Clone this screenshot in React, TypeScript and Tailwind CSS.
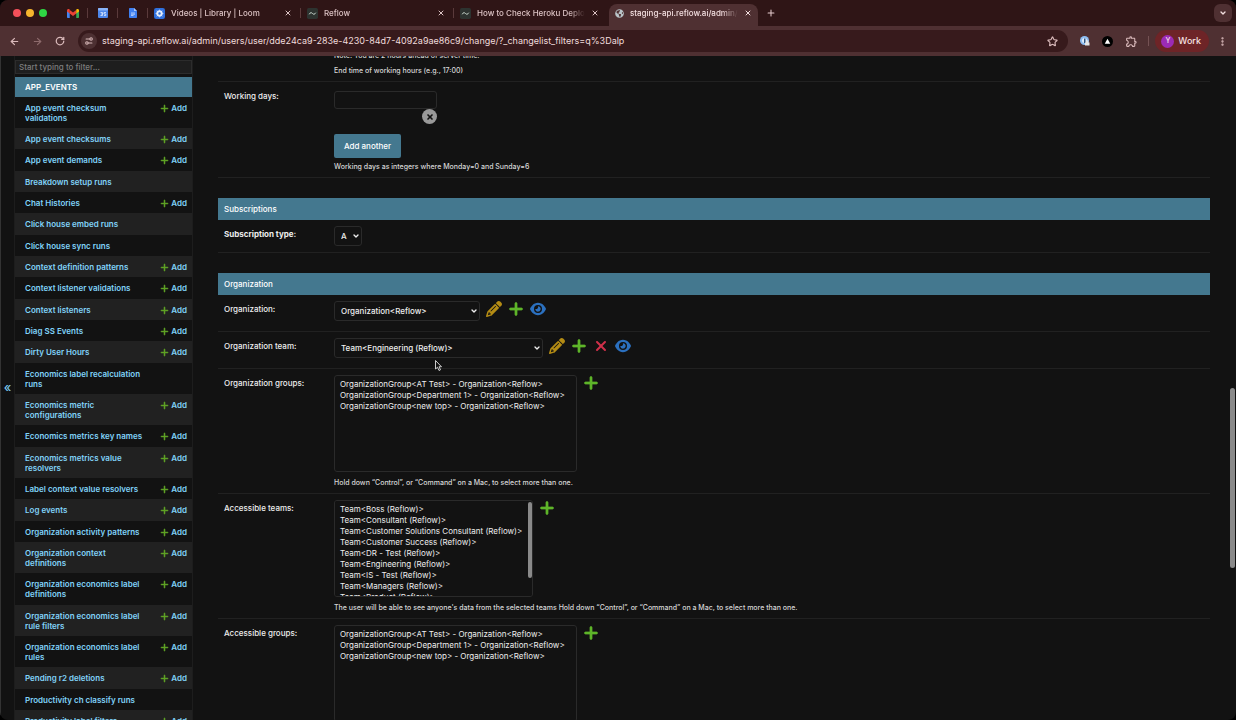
import type { ReactNode } from 'react';
import { ArrowLeft, ArrowRight, ChevronDown, EllipsisVertical, Plus, RotateCw, Settings2, Star, X } from 'lucide-react';
import { FaEye, FaPencil, FaPlus, FaXmark } from 'react-icons/fa6';
import { FaGlobeAmericas } from 'react-icons/fa';
import { MdOutlineExtension } from 'react-icons/md';

const models = [
  { name: 'App event checksum validations', add: true },
  { name: 'App event checksums', add: true },
  { name: 'App event demands', add: true },
  { name: 'Breakdown setup runs', add: false },
  { name: 'Chat Histories', add: true },
  { name: 'Click house embed runs', add: false },
  { name: 'Click house sync runs', add: false },
  { name: 'Context definition patterns', add: true },
  { name: 'Context listener validations', add: true },
  { name: 'Context listeners', add: true },
  { name: 'Diag SS Events', add: true },
  { name: 'Dirty User Hours', add: true },
  { name: 'Economics label recalculation runs', add: false },
  { name: 'Economics metric configurations', add: true },
  { name: 'Economics metrics key names', add: true },
  { name: 'Economics metrics value resolvers', add: true },
  { name: 'Label context value resolvers', add: true },
  { name: 'Log events', add: true },
  { name: 'Organization activity patterns', add: true },
  { name: 'Organization context definitions', add: true },
  { name: 'Organization economics label definitions', add: true },
  { name: 'Organization economics label rule filters', add: true },
  { name: 'Organization economics label rules', add: true },
  { name: 'Pending r2 deletions', add: true },
  { name: 'Productivity ch classify runs', add: false },
  { name: 'Productivity label filters', add: true },
];

const groups = [
  'OrganizationGroup<AT Test> - Organization<Reflow>',
  'OrganizationGroup<Department 1> - Organization<Reflow>',
  'OrganizationGroup<new top> - Organization<Reflow>',
];

const teams = [
  'Team<Boss (Reflow)>',
  'Team<Consultant (Reflow)>',
  'Team<Customer Solutions Consultant (Reflow)>',
  'Team<Customer Success (Reflow)>',
  'Team<DR - Test (Reflow)>',
  'Team<Engineering (Reflow)>',
  'Team<IS - Test (Reflow)>',
  'Team<Managers (Reflow)>',
  'Team<Product (Reflow)>',
];

const multiHelp = 'Hold down “Control”, or “Command” on a Mac, to select more than one.';

/* ---------- Browser chrome ---------- */

function GmailIcon() {
  return (
    <svg viewBox="0 0 24 18" className="w-3 h-[9px]">
      <path d="M0 3v13.5A1.5 1.5 0 0 0 1.5 18H5.500V8z" fill="#4285f4" />
      <path d="M24 3v13.500A1.500 1.500 0 0 1 22.500 18H18.500V8z" fill="#34a853" />
      <path d="M5.500 2v7L12 14l6.500-5V2L12 7z" fill="#ea4335" />
      <path d="M0 3c0-2.600 2.800-3.800 4.800-2.300L5.500 1.300V9L0 5z" fill="#ea4335" />
      <path d="M24 3c0-2.600-2.800-3.800-4.800-2.300l-.7.6V9L24 5z" fill="#fbbc04" />
    </svg>
  );
}

function CalendarIcon() {
  return (
    <svg viewBox="0 0 20 20" className="size-2.5">
      <rect width="20" height="20" rx="2" fill="#4d86ea" />
      <rect width="20" height="5" rx="2" fill="#8ab4f8" />
      <path d="M5 9h4v6H5M6 12h3M12 9h4M12 9v3h3.500v3H12" stroke="#dfeafd" strokeWidth="1.600" fill="none" />
    </svg>
  );
}

function DocsIcon() {
  return (
    <svg viewBox="0 0 16 20" className="w-2 h-2.5">
      <path d="M1.500 0H10l6 6v12.500a1.500 1.500 0 0 1-1.500 1.500h-13A1.500 1.500 0 0 1 0 18.500v-17A1.500 1.500 0 0 1 1.500 0z" fill="#3f7ff0" />
      <path d="M10 0l6 6h-6z" fill="#a9c7fb" />
      <path d="M4 10h8M4 12.500h8M4 15h5" stroke="#e6effe" strokeWidth="1.300" />
    </svg>
  );
}

function LoomIcon() {
  return (
    <svg viewBox="0 0 20 20" className="size-[11px] shrink-0">
      <rect width="20" height="20" rx="4" fill="#2f6fdc" />
      <circle cx="10" cy="10" r="4" fill="none" stroke="#e4edfb" strokeWidth="3.500" />
      <path d="M10 3v2M10 15v2M3 10h2M15 10h2M5 5l1.500 1.500M13.500 13.500L15 15M5 15l1.500-1.500M13.500 6.500L15 5" stroke="#e4edfb" strokeWidth="1.500" />
    </svg>
  );
}

function ReflowIcon() {
  return (
    <svg viewBox="0 0 20 20" className="size-[11px] shrink-0">
      <rect width="20" height="20" rx="3" fill="#2d3330" />
      <path d="M4 11.500c2-4 4.200-3.500 6-1.500s4 2 6-1.500" stroke="#c9d6cd" strokeWidth="1.800" fill="none" />
    </svg>
  );
}

function Tab({ icon, title, active = false, last = false }: { icon: ReactNode; title: string; active?: boolean; last?: boolean }) {
  return (
    <div className={`w-[153px] h-full flex items-center ${active ? 'pt-1 px-0.5' : ''}`}>
      <div
        className={
          active
            ? 'flex-1 min-w-0 h-full pb-1 flex items-center gap-1.5 pl-1.5 pr-1.5 rounded-t-lg bg-[#4f3032] text-[#f3dfe0]'
            : `flex-1 min-w-0 h-[10px] flex items-center gap-1.5 pl-1.5 pr-2 text-[#dcc3c4] ${last ? '' : 'border-r border-[#5a3a3b]'}`
        }
      >
        {icon}
        <a
          href="#"
          className="flex-1 min-w-0 whitespace-nowrap text-[8px] leading-3 font-medium [mask-image:linear-gradient(to_right,black_85%,transparent)]"
        >
          {title}
        </a>
        <button type="button" aria-label={`Close ${title}`}>
          <X className="size-2" strokeWidth={3} />
        </button>
      </div>
    </div>
  );
}

function BrowserChrome() {
  return (
    <header className="shrink-0 bg-[#2f1516]">
      <div className="h-[26px] flex items-center">
        <div className="w-[58px] flex gap-[5px] pl-[13px]">
          <span className="size-2 rounded-full bg-[#f4505a]" />
          <span className="size-2 rounded-full bg-[#f6b62e]" />
          <span className="size-2 rounded-full bg-[#2fd644]" />
        </div>
        <div className="w-[30px] h-[10px] flex items-center justify-center border-r border-[#5a3a3b]"><GmailIcon /></div>
        <div className="w-[30px] h-[10px] flex items-center justify-center border-r border-[#5a3a3b]"><CalendarIcon /></div>
        <div className="w-[30px] h-[10px] flex items-center justify-center border-r border-[#5a3a3b]"><DocsIcon /></div>
        <Tab icon={<LoomIcon />} title="Videos | Library | Loom" />
        <Tab icon={<ReflowIcon />} title="Reflow" />
        <Tab icon={<ReflowIcon />} title="How to Check Heroku Deploy" last />
        <Tab icon={<FaGlobeAmericas className="size-[9px] shrink-0 text-[#b9c4c8]" />} title="staging-api.reflow.ai/admin/u" active />
        <button type="button" aria-label="New tab" className="ml-1.5 text-[#e6cccd]">
          <Plus className="size-2.5" strokeWidth={2.5} />
        </button>
        <button type="button" aria-label="Search tabs" className="ml-auto mr-1 size-[18px] rounded-md bg-[#4f3032] text-[#f3dfe0] flex items-center justify-center">
          <ChevronDown className="size-2" strokeWidth={4} />
        </button>
      </div>
      <div className="h-[30px] flex items-center bg-[#4f3032] text-[#d9b9ba]">
        <div className="w-[78px] flex items-center gap-3 pl-[9px]">
          <button type="button" aria-label="Back"><ArrowLeft className="size-[11px]" strokeWidth={2.5} /></button>
          <button type="button" aria-label="Forward" className="text-[#8d6a6c]"><ArrowRight className="size-[11px]" strokeWidth={2.5} /></button>
          <button type="button" aria-label="Reload"><RotateCw className="size-[10px]" strokeWidth={3} /></button>
        </div>
        <div className="flex-1 h-[22px] rounded-full bg-[#371a1c] flex items-center gap-[5px] pl-[3px] pr-2.5">
          <button type="button" aria-label="Site settings" className="size-4 rounded-full bg-[#4d3032] flex items-center justify-center">
            <Settings2 className="size-[10px] -scale-y-100" strokeWidth={2.5} />
          </button>
          <input
            aria-label="Address"
            className="flex-1 min-w-0 text-[9px] leading-4 text-[#f0dcdd] outline-none"
            defaultValue="staging-api.reflow.ai/admin/users/user/dde24ca9-283e-4230-84d7-4092a9ae86c9/change/?_changelist_filters=q%3Dalp"
          />
          <button type="button" aria-label="Bookmark"><Star className="size-[11px]" strokeWidth={2.5} /></button>
        </div>
        <div className="flex items-center pl-3">
          <button type="button" aria-label="1Password" className="mr-3">
            <svg viewBox="0 0 20 20" className="size-[10px]">
              <circle cx="9" cy="9" r="9" fill="#8dbdf2" />
              <circle cx="9" cy="9" r="5" fill="#dfeefe" />
              <rect x="8" y="5" width="3" height="9" fill="#35557c" />
              <path d="M12 13v-2a2.500 2.500 0 0 1 5 0v2h2v6h-9v-6z" fill="#e6e6e6" />
            </svg>
          </button>
          <button type="button" aria-label="Extension" className="mr-3">
            <svg viewBox="0 0 20 20" className="size-[11px]">
              <circle cx="10" cy="10" r="10" fill="#000" />
              <path d="M10 5l5 9H5z" fill="#fff" />
            </svg>
          </button>
          <button type="button" aria-label="Extensions" className="mr-[10px]"><MdOutlineExtension className="size-[13px]" /></button>
          <span className="w-px h-[10px] bg-[#755254] mr-1.5" />
          <button type="button" className="h-[22px] rounded-full bg-[#6e2427] flex items-center gap-1 pl-1.5 pr-2 text-[9px] font-medium text-[#f6e2e3]">
            <span className="size-[13px] rounded-full bg-[#9c2bb5] text-[7px] flex items-center justify-center">Y</span>
            Work
          </button>
          <button type="button" aria-label="Menu" className="ml-2 mr-2"><EllipsisVertical className="size-[11px]" strokeWidth={3} /></button>
        </div>
      </div>
    </header>
  );
}

/* ---------- Admin sidebar ---------- */

function Sidebar() {
  return (
    <nav className="shrink-0 w-[179px] h-full overflow-hidden border-x border-[#1d1d1d] pt-1">
      <input
        aria-label="Filter navigation items"
        placeholder="Start typing to filter..."
        className="block w-full h-3.5 mb-[3px] px-[3px] border border-[#2c2c2c] bg-[#1e1e1e] text-[8px] font-medium text-white placeholder:text-[#7d7d7d] outline-none"
      />
      <table className="w-full text-[8px] leading-[10px] font-semibold text-[#81d4fa]">
        <caption className="h-5 px-2.5 bg-[#44788f] text-left leading-5 text-white">
          <a href="#">APP_EVENTS</a>
        </caption>
        <tbody>
          {models.map((model) => (
            <tr key={model.name} className="even:bg-[#212121] align-top [&>*]:pt-1.5 [&>*]:pb-[5px] [&:nth-child(3n)>*]:pb-1.5">
              <th scope="row" className="pl-2.5 text-left font-semibold"><a href="#">{model.name}</a></th>
              <td className="w-[47px] pr-[5px]">
                {model.add && (
                  <a href="#" className="flex items-center justify-end gap-0.5">
                    <FaPlus className="size-[9px] text-[#5fa225]" stroke="currentColor" strokeWidth={24} />
                    Add
                  </a>
                )}
              </td>
            </tr>
          ))}
        </tbody>
      </table>
    </nav>
  );
}

/* ---------- Form pieces ---------- */

function FormRow({ label, id, required = false, children }: { label: string; id: string; required?: boolean; children: ReactNode }) {
  return (
    <div className="flex items-start py-1.5 pl-1.5 border-b border-[#212121]">
      <label htmlFor={id} className={`w-[110px] shrink-0 pt-[3px] text-[8px] leading-[11px] text-[#eeeeee] ${required ? 'font-bold' : 'font-medium'}`}>
        {label}
      </label>
      <div className="min-w-0">{children}</div>
    </div>
  );
}

function SectionTitle({ children }: { children: ReactNode }) {
  return <h2 className="mt-5 h-[22px] px-1.5 bg-[#44788f] text-[8px] leading-[22px] font-medium text-white">{children}</h2>;
}

function Help({ children }: { children: ReactNode }) {
  return <p className="text-[7px] leading-[9px] font-medium text-[#d6d6d6]">{children}</p>;
}

function Dropdown({ id, value, width }: { id: string; value: string; width: string }) {
  return (
    <div className={`relative ${width}`}>
      <select id={id} className="block w-full h-5 pl-1.5 appearance-none rounded-[3px] border border-[#2a2a2a] bg-[#121212] text-[8px] font-medium text-[#eeeeee]">
        <option>{value}</option>
      </select>
      <ChevronDown className="absolute right-0.5 top-1.5 size-2 text-[#eeeeee] pointer-events-none" strokeWidth={4} />
    </div>
  );
}

function ListBox({ id, options, width, scroll = false }: { id: string; options: string[]; width: string; scroll?: boolean }) {
  return (
    <div className={`relative ${width}`}>
      <select
        id={id}
        multiple
        className="block w-full h-[97px] py-[3px] px-[5px] rounded-[3px] border border-[#2a2a2a] bg-[#121212] text-[8px] font-medium text-[#eeeeee] [scrollbar-width:none]"
      >
        {options.map((option) => (
          <option key={option} className="block h-[11px] min-h-0 p-0 leading-[11px]">{option}</option>
        ))}
      </select>
      {scroll && <div className="absolute right-px top-0.5 w-1 h-[76px] rounded-full bg-[#8a8a8a]" />}
    </div>
  );
}

function EditLink() {
  return <a href="#" aria-label="Change selected"><FaPencil className="size-4 text-[#b48c14]" /></a>;
}

function AddLink() {
  return <a href="#" aria-label="Add another"><FaPlus className="size-4 text-[#5fb52a]" stroke="currentColor" strokeWidth={24} /></a>;
}

function DeleteLink() {
  return <a href="#" aria-label="Delete selected"><FaXmark className="size-4 text-[#d0304a]" /></a>;
}

function ViewLink() {
  return <a href="#" aria-label="View selected"><FaEye className="size-4 text-[#2b70bf]" /></a>;
}

function ChangeForm() {
  return (
    <main className="flex-1 min-w-0 h-full overflow-hidden pl-[25px] pr-[26px]">
      <form className="-mt-[5px]">
        <div className="flex flex-col gap-1.5 pl-[116px] pb-1.5 border-b border-[#212121]">
          <Help>Note: You are 2 hours ahead of server time.</Help>
          <Help>End time of working hours (e.g., 17:00)</Help>
        </div>
        <FormRow label="Working days:" id="working_days">
          <div className="w-[103px] pt-[3px] mb-2.5 flex flex-col items-end">
            <input id="working_days" type="text" className="w-full h-[18px] rounded-[3px] border border-[#2a2a2a] px-1 text-[8px] text-[#eeeeee]" />
            <button type="button" aria-label="Remove" className="size-[15px] rounded-full bg-[#999999] text-[#121212] flex items-center justify-center">
              <X className="size-2" strokeWidth={5} />
            </button>
          </div>
          <button type="button" className="block h-6 w-[67px] rounded-[2px] bg-[#44788f] text-[8px] font-medium text-white">Add another</button>
          <div className="mt-1"><Help>Working days as integers where Monday=0 and Sunday=6</Help></div>
        </FormRow>

        <SectionTitle>Subscriptions</SectionTitle>
        <FormRow label="Subscription type:" id="subscription_type" required>
          <Dropdown id="subscription_type" value="A" width="w-7" />
        </FormRow>

        <SectionTitle>Organization</SectionTitle>
        <FormRow label="Organization:" id="organization">
          <div className="flex items-start gap-1.5 pb-1">
            <Dropdown id="organization" value="Organization<Reflow>" width="w-[146px]" />
            <EditLink />
            <AddLink />
            <ViewLink />
          </div>
        </FormRow>
        <FormRow label="Organization team:" id="organization_team">
          <div className="flex items-start gap-1.5 pb-1">
            <Dropdown id="organization_team" value="Team<Engineering (Reflow)>" width="w-[209px]" />
            <EditLink />
            <AddLink />
            <DeleteLink />
            <ViewLink />
          </div>
        </FormRow>
        <FormRow label="Organization groups:" id="organization_groups">
          <div className="flex items-start gap-1.5 mb-1.5">
            <ListBox id="organization_groups" options={groups} width="w-[243px]" />
            <AddLink />
          </div>
          <Help>{multiHelp}</Help>
        </FormRow>
        <FormRow label="Accessible teams:" id="accessible_teams">
          <div className="flex items-start gap-1.5 mb-1.5">
            <ListBox id="accessible_teams" options={teams} width="w-[199px]" scroll />
            <AddLink />
          </div>
          <Help>The user will be able to see anyone's data from the selected teams {multiHelp}</Help>
        </FormRow>
        <FormRow label="Accessible groups:" id="accessible_groups">
          <div className="flex items-start gap-1.5 mb-1.5">
            <ListBox id="accessible_groups" options={groups} width="w-[243px]" />
            <AddLink />
          </div>
          <Help>{multiHelp}</Help>
        </FormRow>
      </form>
    </main>
  );
}

export default function App() {
  return (
    <div className="h-screen bg-black">
      <div className="relative h-full flex flex-col overflow-hidden rounded-lg bg-[#121212] font-[Inter,'Open_Sans',sans-serif]">
        <BrowserChrome />
        <div className="flex-1 min-h-0 flex border-l border-[#333333]">
          <button type="button" aria-label="Toggle navigation" className="w-[13px] shrink-0 text-[13px] text-[#81d4fa]">«</button>
          <Sidebar />
          <ChangeForm />
        </div>

        {/* Page scrollbar */}
        <div className="absolute right-px top-[388px] w-[5px] h-[180px] rounded-full bg-[#8a8a8a]" />

        {/* Mouse pointer */}
        <svg viewBox="0 0 14 22" className="absolute left-[435px] top-[360px] w-[7px] h-[11px] pointer-events-none">
          <path d="M1 1v17l4-3.500 3 6.500 3-1.500-3-6h5z" fill="#121212" stroke="#e0e0e0" strokeWidth="1.800" />
        </svg>
      </div>
    </div>
  );
}
